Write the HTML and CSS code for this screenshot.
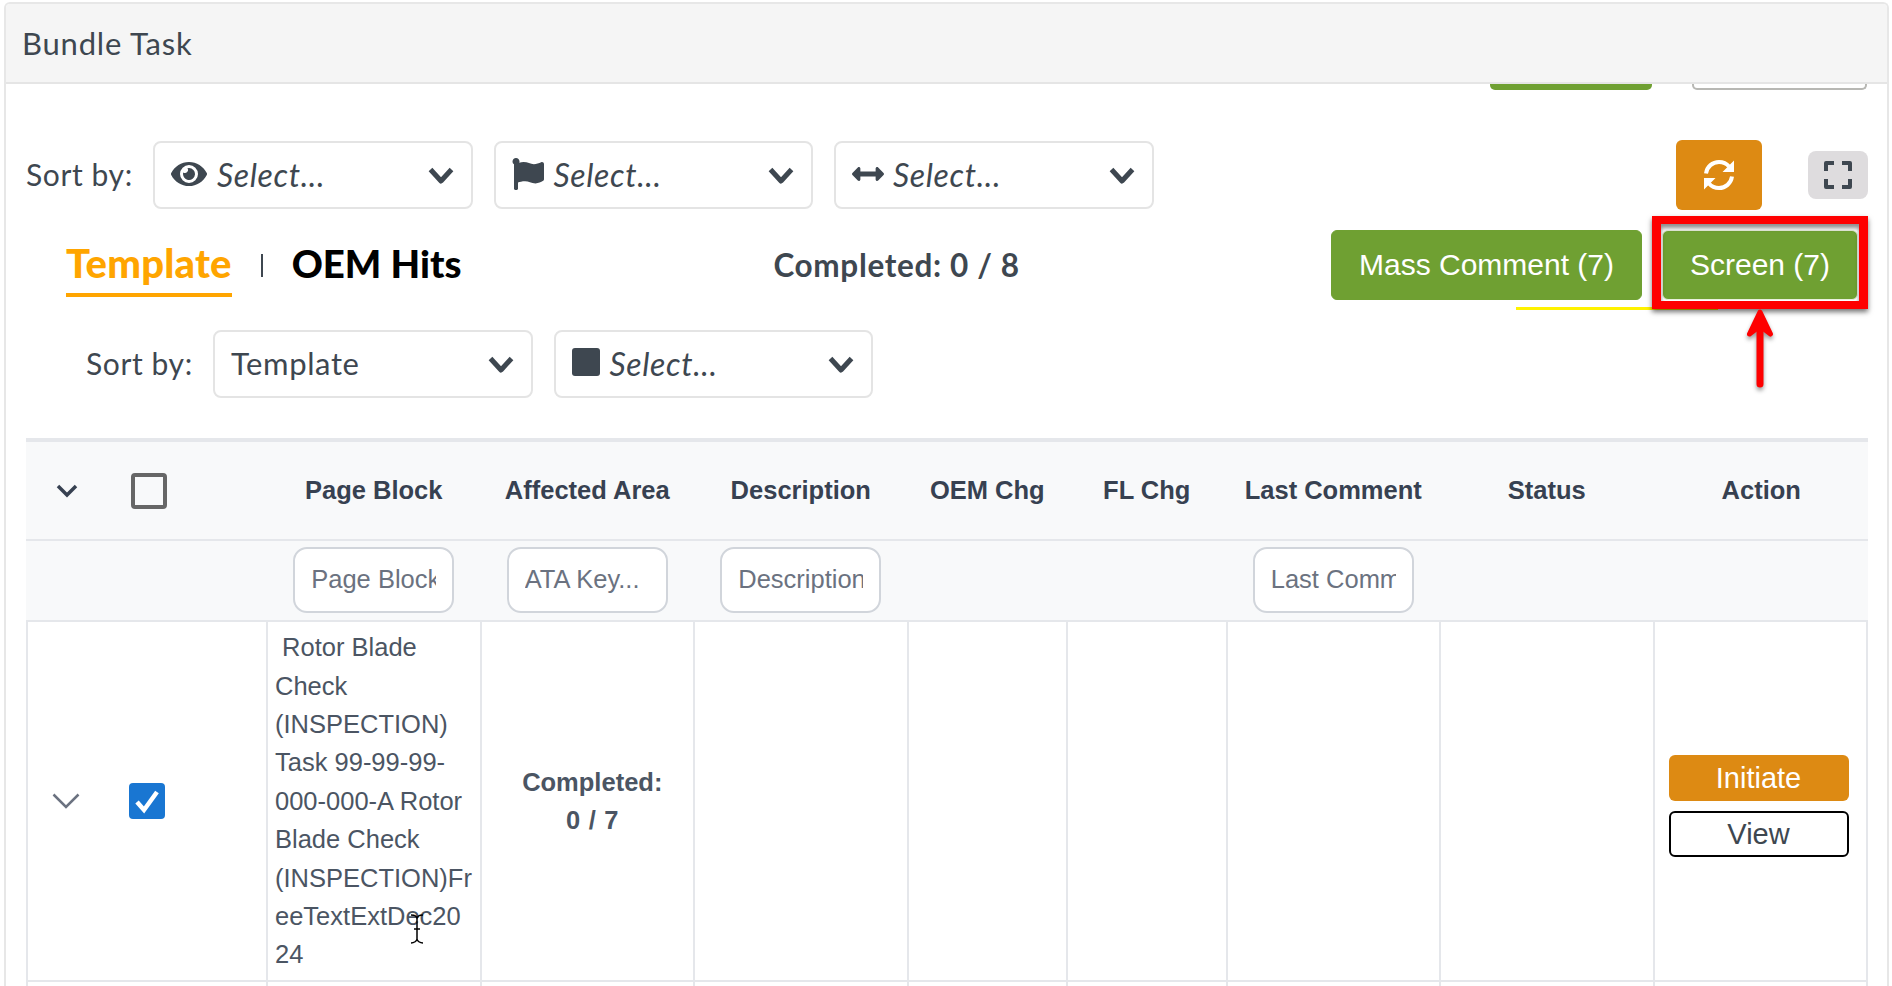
FILE: index.html
```html
<!DOCTYPE html>
<html lang="en">
<head>
<meta charset="utf-8">
<title>Bundle Task</title>
<link rel="stylesheet" href="styles.css">
</head>
<body>
<div class="stage">
  <section class="panel">
    <header class="panel-head">Bundle Task</header>
    <div class="peek"><span class="peek-green"></span><span class="peek-white"></span></div>

    <div class="sort-row">
      <span class="sort-label">Sort by:</span>
      <div class="select">
        <svg class="ico eye" viewBox="0 0 576 512"><path d="M572.52 241.4C518.29 135.59 410.93 64 288 64S57.68 135.64 3.48 241.41a32.35 32.35 0 0 0 0 29.19C57.71 376.41 165.07 448 288 448s230.32-71.64 284.52-177.41a32.35 32.35 0 0 0 0-29.19zM288 400a144 144 0 1 1 144-144 143.93 143.93 0 0 1-144 144zm0-240a95.31 95.31 0 0 0-25.31 3.79 47.85 47.85 0 0 1-66.9 66.9A95.78 95.78 0 1 0 288 160z"/></svg>
        <span class="ph">Select...</span>
        <svg class="chev" viewBox="0 0 28 20"><path d="M3.5 3.5L14 15 24.5 3.5"/></svg>
      </div>
      <div class="select">
        <svg class="ico flag" viewBox="0 0 512 512"><path d="M349.565 98.783C295.978 98.783 251.721 64 184.348 64c-24.955 0-47.309 4.384-68.045 12.013a55.947 55.947 0 0 0 3.586-23.562C118.117 24.015 94.806 1.206 66.338.048 34.345-1.254 8 24.296 8 56c0 19.026 9.497 35.825 24 45.945V488c0 13.255 10.745 24 24 24h16c13.255 0 24-10.745 24-24v-94.4c28.311-12.064 63.582-22.122 114.435-22.122 53.588 0 97.844 34.783 165.217 34.783 48.169 0 86.667-16.294 122.505-40.858C506.84 359.452 512 349.571 512 339.045v-243.1c0-23.393-24.269-38.87-45.485-29.016-34.338 15.948-76.454 31.854-116.95 31.854z"/></svg>
        <span class="ph">Select...</span>
        <svg class="chev" viewBox="0 0 28 20"><path d="M3.5 3.5L14 15 24.5 3.5"/></svg>
      </div>
      <div class="select">
        <svg class="ico arrows" viewBox="0 0 512 512"><path d="M377.941 169.941V216H134.059v-46.059c0-21.382-25.851-32.09-40.971-16.971L7.029 239.029c-9.373 9.373-9.373 24.568 0 33.941l86.059 86.059c15.119 15.119 40.971 4.411 40.971-16.971V296h243.882v46.059c0 21.382 25.851 32.09 40.971 16.971l86.059-86.059c9.373-9.373 9.373-24.568 0-33.941l-86.059-86.059c-15.12-15.119-40.971-4.411-40.971 16.97z"/></svg>
        <span class="ph">Select...</span>
        <svg class="chev" viewBox="0 0 28 20"><path d="M3.5 3.5L14 15 24.5 3.5"/></svg>
      </div>
      <button class="refresh" type="button" aria-label="Refresh">
        <svg viewBox="0 0 32 32"><path class="arc" d="M3 14.500C4 7.500 9.500 3 16 3c4 0 7.500 1.500 10 4.500M29 17.500C28 24.500 22.500 29 16 29c-4 0-7.500-1.500-10-4.500"/><path class="tip" d="M31 1.500V13H19.500zM1 30.500V19h11.500z"/></svg>
      </button>
      <button class="fullscreen" type="button" aria-label="Fullscreen">
        <svg viewBox="0 0 28 28"><path d="M2 10V2h8M18 2h8v8M26 18v8h-8M10 26H2v-8"/></svg>
      </button>
    </div>

    <div class="tabs-row">
      <span class="tab active">Template</span>
      <span class="tab-sep"></span>
      <span class="tab">OEM Hits</span>
      <span class="completed">Completed: 0 / 8</span>
      <div class="tab-actions">
        <button class="btn-green mass" type="button">Mass Comment (7)</button>
        <button class="btn-green screen" type="button">Screen (7)</button>
      </div>
    </div>

    <div class="sort-row second">
      <span class="sort-label">Sort by:</span>
      <div class="select">
        <span class="val">Template</span>
        <svg class="chev" viewBox="0 0 28 20"><path d="M3.5 3.5L14 15 24.5 3.5"/></svg>
      </div>
      <div class="select">
        <span class="square"></span>
        <span class="ph">Select...</span>
        <svg class="chev" viewBox="0 0 28 20"><path d="M3.5 3.5L14 15 24.5 3.5"/></svg>
      </div>
    </div>

    <table class="grid">
      <colgroup>
        <col class="c-sel"><col class="c-w"><col class="c-w"><col class="c-w"><col class="c-n"><col class="c-n"><col class="c-w"><col class="c-w"><col class="c-l">
      </colgroup>
      <thead>
        <tr class="head-row">
          <th class="sel-cell">
            <div class="sel-inner">
              <svg class="row-chev head" viewBox="0 0 22 14"><path d="M2 2l9 9 9-9"/></svg>
              <span class="box"></span>
            </div>
          </th>
          <th>Page Block</th>
          <th>Affected Area</th>
          <th>Description</th>
          <th>OEM Chg</th>
          <th>FL Chg</th>
          <th>Last Comment</th>
          <th>Status</th>
          <th>Action</th>
        </tr>
        <tr class="filter-row">
          <th></th>
          <th><input class="filter" placeholder="Page Block"></th>
          <th><input class="filter" placeholder="ATA Key..."></th>
          <th><input class="filter" placeholder="Description"></th>
          <th></th>
          <th></th>
          <th><input class="filter" placeholder="Last Comment"></th>
          <th></th>
          <th></th>
        </tr>
      </thead>
      <tbody>
        <tr class="data-row">
          <td class="sel-cell">
            <div class="sel-inner">
              <svg class="row-chev" viewBox="0 0 28 16"><path d="M1.5 1.5L14 14 26.5 1.5"/></svg>
              <span class="box checked"><svg viewBox="0 0 36 36"><path d="M8 19l7 8L28 9"/></svg></span>
            </div>
          </td>
          <td class="block-text">&nbsp;Rotor Blade<br>Check<br>(INSPECTION)<br>Task 99-99-99-<br>000-000-A Rotor<br>Blade Check<br>(INSPECTION)Fr<br>eeTextExtDec20<br>24</td>
          <td class="count">Completed:<br>0 / 7</td>
          <td></td>
          <td></td>
          <td></td>
          <td></td>
          <td></td>
          <td class="actions">
            <button class="btn-init" type="button">Initiate</button>
            <button class="btn-view" type="button">View</button>
          </td>
        </tr>
        <tr class="next-row"><td></td><td></td><td></td><td></td><td></td><td></td><td></td><td></td><td></td></tr>
      </tbody>
    </table>
  </section>

  <span class="note-line"></span>
  <span class="note-box"></span>
  <svg class="note-arrow" viewBox="0 0 40 90"><path class="shaft" d="M20 24V80"/><path class="barb" d="M20 8L9.500 30 20 22l10.500 8z"/></svg>
  <svg class="cursor" viewBox="0 0 14 30"><path d="M1 1c3 0 6 1 6 4v20c0 2-3 4-6 4M13 1c-3 0-6 1-6 4v20c0 2 3 4 6 4M4 15h6"/></svg>
</div>
</body>
</html>
```
FILE: styles.css
```css
* { box-sizing: border-box; }
html, body { margin: 0; padding: 0; background: #fff; }
.stage { position: relative; width: 1892px; height: 986px; overflow: hidden; font-family: Lato, "Liberation Sans", sans-serif; color: #3e4750; }
button { font: inherit; padding: 0; cursor: pointer; }

.panel { margin: 2px 3px 0 4px; height: 984px; border: 2px solid #e7e7e7; border-bottom: 0; border-radius: 6px 6px 0 0; overflow: hidden; }
.panel-head { height: 80px; background: #f5f5f5; border-bottom: 2px solid #e5e5e5; padding-left: 16px; font-size: 31px; line-height: 78px; letter-spacing: .8px; color: #3e4750; }

.peek { display: flex; justify-content: flex-end; height: 6px; padding-right: 20px; gap: 40px; }
.peek-green { width: 162px; background: #6fa032; border-radius: 0 0 5px 5px; }
.peek-white { width: 175px; border: 2px solid #b8b8b4; border-top: 0; border-radius: 0 0 5px 5px; }

.sort-row { display: flex; align-items: center; height: 70px; margin-top: 50px; padding: 0 19px 0 20px; }
.sort-row.second { margin-top: 30px; padding-left: 80px; height: 68px; }
.sort-label { width: 127px; font-size: 30px; letter-spacing: .6px; white-space: nowrap; padding-bottom: 2px; }

.select { display: flex; align-items: center; width: 319.5px; height: 68px; margin-right: 21px; padding: 0 16px 2px 16px; background: #fff; border: 2px solid #e4e4e4; border-radius: 8px; }
.ph { font-style: italic; font-size: 32px; letter-spacing: .65px; }
.val { font-size: 31px; letter-spacing: .6px; }
.chev { width: 28px; height: 20px; margin: 4px 0 0 auto; fill: none; stroke: #3e4750; stroke-width: 5; stroke-linejoin: round; }
.ico { fill: #3e4750; flex: none; }
.eye { width: 36px; height: 32px; margin-right: 10px; }
.flag { width: 32px; height: 32px; margin-right: 10px; }
.arrows { width: 32px; height: 32px; margin-right: 9px; }
.square { width: 28px; height: 28px; margin-right: 10px; background: #3e4750; border-radius: 3px; margin-top: -2px; }

.refresh { width: 86px; height: 70px; margin-left: auto; background: #dd8a13; border: 0; border-radius: 6px; display: flex; align-items: center; justify-content: center; }
.refresh svg { width: 32px; height: 32px; }
.arc { fill: none; stroke: #fff; stroke-width: 4; }
.tip { fill: #fff; }
.fullscreen { width: 60px; height: 48px; margin-left: 46px; background: #dedcde; border: 0; border-radius: 8px; display: flex; align-items: center; justify-content: center; }
.fullscreen svg { width: 28px; height: 28px; fill: none; stroke: #3e4750; stroke-width: 4; stroke-linejoin: round; }

.tabs-row { display: flex; align-items: center; height: 70px; margin-top: 20px; padding-left: 60px; padding-right: 29px; }
.tab { align-self: flex-start; font-size: 38.4px; font-weight: 900; color: #000; height: 67px; line-height: 66px; white-space: nowrap; }
.tab.active { font-size: 40px; letter-spacing: .2px; color: #ffa500; border-bottom: 4px solid #ffa500; }
.tab-sep { width: 2px; height: 23px; background: #3e4750; margin: 0 29px; }
.completed { margin-left: 312px; font-size: 31.5px; font-weight: 700; letter-spacing: .65px; color: #3e4750; white-space: nowrap; }
.tab-actions { margin-left: auto; display: flex; gap: 20px; }
.btn-green { height: 70px; background: #6fa032; border: 1px solid #6fa032; border-radius: 6px; color: #fff; font-family: "Liberation Sans", sans-serif; font-size: 30px; }
.mass { width: 311px; }
.screen { width: 196px; border-color: #e8efdc; }

.grid { margin: 40px 0 0 20px; width: 1842px; table-layout: fixed; border-collapse: separate; border-spacing: 0; font-family: "Liberation Sans", Arial, sans-serif; font-size: 25.5px; color: #4b5563; border-top: 4px solid #e5e7eb; }
.c-sel { width: 240px; }
.c-w { width: 213.5px; }
.c-n { width: 159.5px; }
.c-l { width: 215.5px; }

.head-row th { height: 99px; background: #f8f9fa; border-bottom: 2px solid #e5e7eb; color: #374151; font-weight: 700; font-size: 25.5px; padding: 0 0 0 2px; }
.filter-row th { height: 81px; background: #f8f9fa; border-bottom: 2px solid #e5e7eb; padding: 0 0 2px 2px; vertical-align: middle; }
.filter { width: 161px; height: 66px; padding: 0 16px; background: #fff; border: 2px solid #d1d5db; border-radius: 14px; font-family: "Liberation Sans", Arial, sans-serif; font-size: 25.5px; color: #6b7280; display: block; margin: 0 auto; }
.filter::placeholder { color: #6b7280; opacity: 1; }

.sel-inner { display: flex; align-items: center; }
.row-chev { flex: none; width: 28px; height: 16px; margin-left: 24px; fill: none; stroke: #6b7280; stroke-width: 2.5; }
.row-chev.head { width: 22px; height: 14px; margin-left: 28px; stroke: #374151; stroke-width: 3.5; }
.box { flex: none; width: 36px; height: 36px; margin-left: 53px; border: 4px solid #666; border-radius: 4px; background: #f8f9fa; }
.box.checked { margin-left: 49px; background: #1976d2; border: 0; }
.box.checked svg { display: block; width: 36px; height: 36px; fill: none; stroke: #fff; stroke-width: 4.5; }

.data-row td { height: 360px; padding: 0; border-left: 2px solid #e5e7eb; border-bottom: 2px solid #e5e7eb; vertical-align: middle; }
.data-row td:last-child, .next-row td:last-child { border-right: 2px solid #e5e7eb; }
.next-row td { height: 10px; padding: 0; border-left: 2px solid #e5e7eb; }
.data-row .block-text { padding: 0 0 0 7px; line-height: 38.4px; white-space: nowrap; }
.data-row .count { text-align: center; padding-left: 10px; font-weight: 700; line-height: 38.4px; word-spacing: 1.5px; color: #4b5563; }
.data-row .actions { padding: 10px 14px 0; }
.btn-init, .btn-view { display: block; width: 180px; height: 46px; border-radius: 6px; font-family: "Liberation Sans", sans-serif; font-size: 29px; }
.btn-init { background: #dd8a13; border: 0; color: #fff; margin-bottom: 10px; }
.btn-view { background: #fff; border: 2px solid #000; color: #3e4750; }

.note-line { position: absolute; left: 1516px; top: 307px; width: 202px; height: 3px; background: #fff200; }
.note-box { position: absolute; left: 1652px; top: 216px; width: 216px; height: 93px; border: solid #fe0000; border-width: 8px 9px; box-shadow: 0 3px 5px rgba(0,0,0,.55), inset 0 4px 4px rgba(0,0,0,.45); }
.note-arrow { position: absolute; left: 1740px; top: 304px; width: 40px; height: 90px; filter: drop-shadow(0 3px 2px rgba(0,0,0,.4)); }
.shaft { fill: none; stroke: #fe0000; stroke-width: 7; stroke-linecap: round; }
.barb { fill: #fe0000; stroke: #fe0000; stroke-width: 5; stroke-linejoin: round; }
.cursor { position: absolute; left: 410px; top: 914px; width: 14px; height: 30px; fill: none; stroke: #000; stroke-width: 1.5; }
```
